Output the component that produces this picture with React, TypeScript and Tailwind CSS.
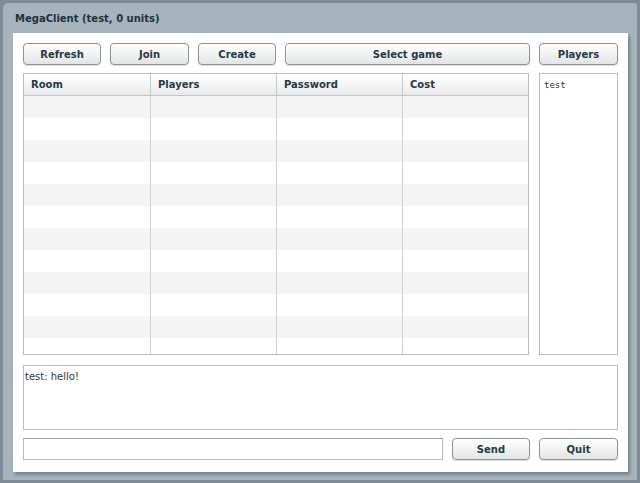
import React from "react";

const font = { fontFamily: '"DejaVu Sans", Verdana, sans-serif' };

function Btn({ label, className = "" }: { label: string; className?: string }) {
  return (
    <button
      className={`h-[22px] rounded-[4px] border border-[#8e9396] bg-gradient-to-b from-[#ffffff] to-[#e2e4e5] shadow-[0_1px_1px_rgba(0,0,0,0.15)] text-[10px] font-bold text-[#253944] flex items-center justify-center ${className}`}
    >
      {label}
    </button>
  );
}

const columns = ["Room", "Players", "Password", "Cost"];
const widths = ["w-[127px]", "w-[126px]", "w-[126px]"];
const rows = Array.from({ length: 12 });

export default function App() {
  return (
    <div className="w-[640px] h-[483px] bg-[#7d8c97] overflow-hidden" style={font}>
      <div className="ml-[3px] mt-[3px] w-[634px] h-[477px] rounded-tl-[5px] rounded-tr-[3px] bg-[#a7b4bd] flex flex-col">
        {/* title */}
        <div className="h-[30px] pl-[12px] flex items-center text-[10px] font-bold text-[#1e323d]">
          MegaClient (test, 0 units)
        </div>

        {/* content */}
        <div className="ml-[10px] w-[615px] h-[439px] bg-white shadow-[2px_3px_3px_rgba(60,75,85,0.45)] pt-[10px] pl-[10px] flex flex-col">
          <div className="flex gap-[9px]">
            <Btn label="Refresh" className="w-[78px]" />
            <Btn label="Join" className="w-[79px]" />
            <Btn label="Create" className="w-[78px]" />
            <Btn label="Select game" className="w-[245px]" />
            <Btn label="Players" className="w-[79px]" />
          </div>

          <div className="flex gap-[10px] mt-[8px]">
            {/* rooms table */}
            <div className="w-[506px] h-[282px] border border-[#b9bdbf] flex flex-col overflow-hidden">
              <div className="h-[22px] flex shrink-0 bg-gradient-to-b from-[#ffffff] to-[#e9eaeb] border-b border-[#c3c6c8]">
                {columns.map((c, i) => (
                  <div
                    key={c}
                    className={`h-full flex items-center pl-[7px] text-[10px] font-bold text-[#253944] ${
                      i < 3 ? `${widths[i]} border-r border-[#c6c9cb]` : "flex-1"
                    }`}
                  >
                    {c}
                  </div>
                ))}
              </div>
              <div className="flex-1 flex flex-col">
                {rows.map((_, r) => (
                  <div key={r} className={`h-[22px] shrink-0 flex ${r % 2 === 0 ? "bg-[#f4f4f4]" : "bg-white"}`}>
                    {columns.map((c, i) => (
                      <div key={c} className={i < 3 ? `${widths[i]} border-r border-[#cfd2d4]` : "flex-1"} />
                    ))}
                  </div>
                ))}
              </div>
            </div>

            {/* players list */}
            <div className="w-[79px] h-[282px] border border-[#b9bdbf] px-[4px] pt-[5px] text-[9px] text-[#253944]" style={{ fontFamily: '"DejaVu Sans Mono", monospace' }}>
              test
            </div>
          </div>

          {/* chat */}
          <div className="mt-[10px] w-[595px] h-[65px] border border-[#b9bdbf] px-[1px] pt-[3px] text-[10px] text-[#253944]">
            test: hello!
          </div>

          <div className="flex gap-[9px] mt-[8px]">
            <input className="w-[420px] h-[22px] border border-[#b9bdbf] border-t-[#9a9fa2] outline-none px-[2px] text-[10px]" />
            <Btn label="Send" className="w-[78px]" />
            <Btn label="Quit" className="w-[79px]" />
          </div>
        </div>
      </div>
    </div>
  );
}
